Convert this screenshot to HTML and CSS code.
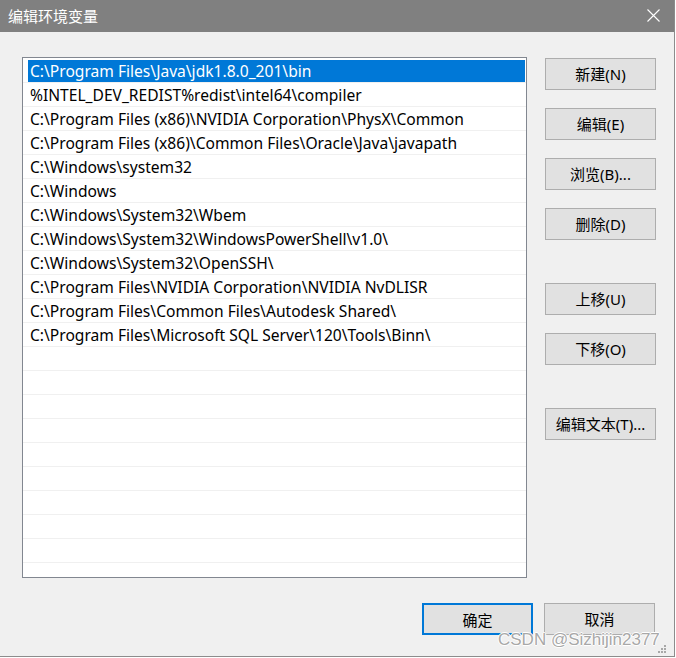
FILE: index.html
```html
<!DOCTYPE html>
<html lang="zh-CN">
<head>
<meta charset="utf-8">
<title>编辑环境变量</title>
<link rel="stylesheet" href="styles.css">
</head>
<body>
<div class="window">
  <div class="titlebar">
    <span class="title">编辑环境变量</span>
    <svg class="close" width="13" height="13" viewBox="0 0 13 13"><path d="M0.5 0.5 L12.5 12.5 M12.5 0.5 L0.5 12.5" stroke="#fff" stroke-width="1.1" fill="none"/></svg>
  </div>
  <div class="content">
    <div class="main">
      <div class="list">
        <div class="row selected"><div class="cell">C:\Program Files\Java\jdk1.8.0_201\bin</div></div>
        <div class="row"><div class="cell">%INTEL_DEV_REDIST%redist\intel64\compiler</div></div>
        <div class="row"><div class="cell">C:\Program Files (x86)\NVIDIA Corporation\PhysX\Common</div></div>
        <div class="row"><div class="cell">C:\Program Files (x86)\Common Files\Oracle\Java\javapath</div></div>
        <div class="row"><div class="cell">C:\Windows\system32</div></div>
        <div class="row"><div class="cell">C:\Windows</div></div>
        <div class="row"><div class="cell">C:\Windows\System32\Wbem</div></div>
        <div class="row"><div class="cell">C:\Windows\System32\WindowsPowerShell\v1.0\</div></div>
        <div class="row"><div class="cell">C:\Windows\System32\OpenSSH\</div></div>
        <div class="row"><div class="cell">C:\Program Files\NVIDIA Corporation\NVIDIA NvDLISR</div></div>
        <div class="row"><div class="cell">C:\Program Files\Common Files\Autodesk Shared\</div></div>
        <div class="row"><div class="cell">C:\Program Files\Microsoft SQL Server\120\Tools\Binn\</div></div>
        <div class="row"><div class="cell"></div></div>
        <div class="row"><div class="cell"></div></div>
        <div class="row"><div class="cell"></div></div>
        <div class="row"><div class="cell"></div></div>
        <div class="row"><div class="cell"></div></div>
        <div class="row"><div class="cell"></div></div>
        <div class="row"><div class="cell"></div></div>
        <div class="row"><div class="cell"></div></div>
        <div class="row"><div class="cell"></div></div>
        <div class="row"><div class="cell"></div></div>
      </div>
      <div class="side">
        <div class="group">
          <button class="btn">新建(N)</button>
          <button class="btn">编辑(E)</button>
          <button class="btn">浏览(B)...</button>
          <button class="btn">删除(D)</button>
        </div>
        <div class="group">
          <button class="btn">上移(U)</button>
          <button class="btn">下移(O)</button>
        </div>
        <div class="group">
          <button class="btn">编辑文本(T)...</button>
        </div>
      </div>
    </div>
    <div class="footer">
      <button class="btn default">确定</button>
      <button class="btn">取消</button>
    </div>
  </div>
  <div class="watermark">CSDN @Sizhijin2377</div>
  <svg class="grip" width="9" height="9" viewBox="0 0 9 9">
    <g fill="#a8a8a8">
      <rect x="6" y="0" width="2" height="2"/>
      <rect x="3" y="3" width="2" height="2"/><rect x="6" y="3" width="2" height="2"/>
      <rect x="0" y="6" width="2" height="2"/><rect x="3" y="6" width="2" height="2"/><rect x="6" y="6" width="2" height="2"/>
    </g>
  </svg>
</div>
</body>
</html>
```

FILE: styles.css
```css
* { box-sizing: border-box; }
html, body { margin: 0; padding: 0; background: #ffffff; }
body {
  font-family: "Noto Sans", "Noto Sans CJK SC", sans-serif;
  font-size: 15.6px;
  color: #000;
}
.window {
  position: relative;
  width: 675px;
  height: 657px;
  background: #f0f0f0;
  border-right: 1px solid #8c8c8c;
  border-bottom: 1px solid #8c8c8c;
  display: flex;
  flex-direction: column;
  overflow: hidden;
}
.titlebar {
  height: 32px;
  background: #808080;
  display: flex;
  align-items: center;
  justify-content: space-between;
  padding: 0 14px 2px 8px;
  flex: none;
}
.title {
  color: #fff;
  font-family: "Noto Sans CJK SC", sans-serif;
  font-size: 15px;
}
.close { display: block; }
.content {
  padding: 25px 19px 0 22px;
  display: flex;
  flex-direction: column;
}
.main {
  display: flex;
  gap: 18px;
  align-items: flex-start;
}
.list {
  width: 505px;
  height: 521px;
  background: #fff;
  border: 1px solid #828790;
  padding-top: 1px;
  overflow: hidden;
  flex: none;
}
.row {
  height: 24px;
  border-bottom: 1px solid #f0f0f0;
  padding: 1px 1px 0 5px;
}
.cell {
  height: 22px;
  line-height: 22px;
  padding-left: 2px;
  white-space: nowrap;
  overflow: hidden;
}
.row.selected .cell {
  background: #0078d7;
  color: #fff;
}
.side {
  display: flex;
  flex-direction: column;
  gap: 43px;
  padding-top: 1px;
}
.group {
  display: flex;
  flex-direction: column;
  gap: 18px;
}
.btn {
  width: 111px;
  height: 32px;
  background: #e1e1e1;
  border: 1px solid #adadad;
  font-family: "Noto Sans", "Noto Sans CJK SC", sans-serif;
  font-size: 15px;
  color: #000;
  padding: 0;
  margin: 0;
  border-radius: 0;
  line-height: 30px;
}
.btn.default {
  border: 2px solid #0078d7;
}
.footer {
  display: flex;
  justify-content: flex-end;
  gap: 11px;
  margin-top: 25px;
}
.watermark {
  position: absolute;
  left: 498px;
  top: 630px;
  font-family: "Liberation Sans", sans-serif;
  font-size: 17px;
  color: #a8a8a8;
  text-shadow: 1px 0 0 #fff, -1px 0 0 #fff, 0 1px 0 #fff, 0 -1px 0 #fff;
  white-space: nowrap;
}
.grip {
  position: absolute;
  right: 7px;
  bottom: 2px;
}
```
